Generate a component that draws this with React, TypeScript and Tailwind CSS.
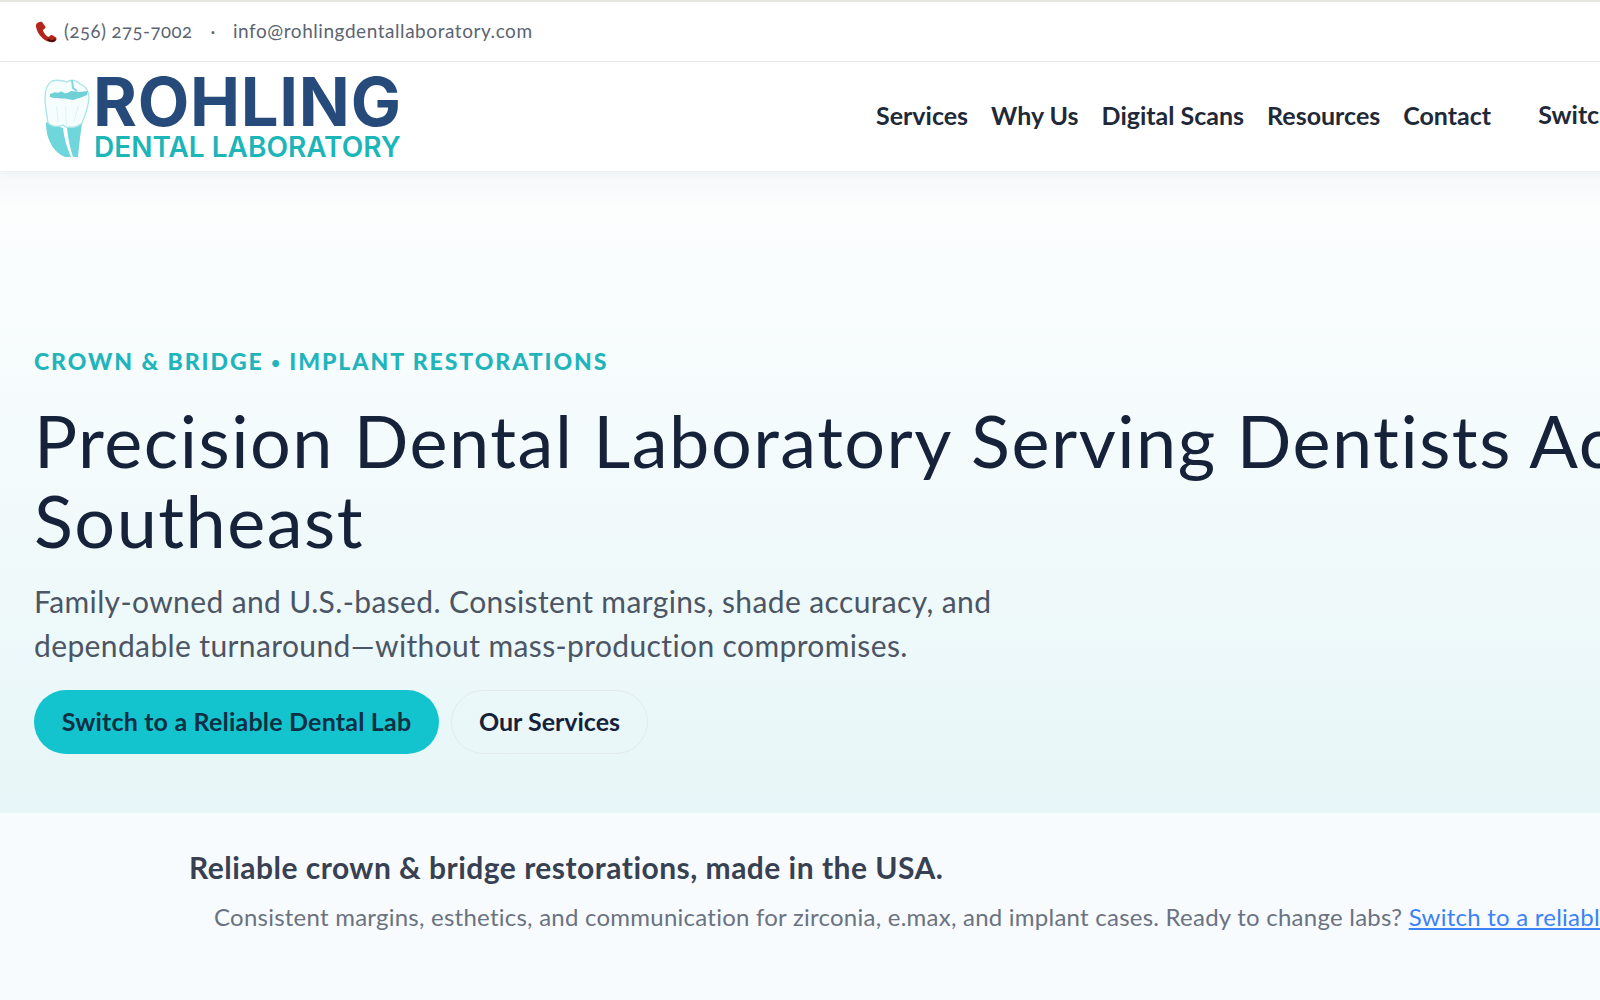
import { ReactNode } from "react";

const font = "font-['Lato','Open_Sans',sans-serif]";

function ToothLogo() {
  return (
    <svg viewBox="0 0 48 82" className="w-[48px] h-[82px] shrink-0">
      <path d="M3 46c0 8 1 14 4 20 3 7 8 12 15 15h6c-4-9-7-19-8-29L3 46Z" fill="#6fd6dc" />
      <path d="M24 52c1 10 3 20 6 29h5c1-11 2-21 4-33l-15 4Z" fill="#6fd6dc" />
      <path
        d="M9 5C4 8 2 14 2 22c0 9 2 17 3 25 4 4 10 4 15 2 2 2 4 3 6 2 5 1 10-1 13-4 3-7 6-16 7-24 0-7-3-13-9-15-3-4-9-5-13-2-5-2-11-2-15-1Z"
        fill="#f6fdfd"
        stroke="#a8e4e8"
        strokeWidth="1.3"
      />
      <path d="M7 18c3-1 5-3 8-1 2-2 4-2 6 0 3 1 5-1 7-2 3 0 6 1 9 1l8-1-1 4c-4 2-8 3-11 4-3 2-6 0-9 0-3-1-6 0-9-1-3 0-6 0-8-1v-3Z" fill="#6fd0d6" />
      <path d="M29 4l1 8 4 3" fill="none" stroke="#7fd6db" strokeWidth="2" />
      <path d="M24 50c-1-6-2-12-1-20M13 30c2 6 2 12 2 17M35 30c-1 6-3 11-4 16" fill="none" stroke="#dcf4f6" strokeWidth="1.1" />
    </svg>
  );
}

function Phone() {
  return (
    <svg viewBox="0 0 22 22" className="w-[22px] h-[22px] shrink-0">
      <path
        d="M3 1.500c-1.600.8-2.300 2.400-2 4.200.9 5 4 9.800 8.500 13 2.600 1.800 6.500 3 9.300 2.200 1.400-.4 2.400-1.500 2.700-2.700.2-.8-.1-1.400-.8-1.900l-3.300-2.100c-.8-.5-1.500-.4-2.100.2l-1.200 1.200c-.5.400-1 .4-1.500 0-2-1.500-3.600-3.600-4.500-5.900-.2-.6 0-1 .4-1.300l1.300-.9c.7-.5.8-1.200.5-2L7.800 1.900C7.300.8 6.500.5 5.400.7L3 1.500Z"
        fill="#b3261e"
      />
      <path d="M13 17.500c1.400 1 3.300 1.800 5 1.500 1-.2 1.700-.8 2.200-1.600l.6 1c-.5 1.300-1.700 2.300-3.200 2.500-2 .2-3.800-.6-5.400-1.700l.8-1.700Z" fill="#4a0d0a" />
    </svg>
  );
}

function NavLink({ children }: { children: ReactNode }) {
  return <a className="text-[25px] font-bold text-[#1f2937] whitespace-nowrap">{children}</a>;
}

export default function App() {
  const links = ["Services", "Why Us", "Digital Scans", "Resources", "Contact"];

  return (
    <div className={`${font} w-[1600px] h-[1000px] overflow-hidden bg-[#f7fbfe]`}>
      <div className="h-[62px] bg-white border-t-2 border-b border-t-[#e6e8e0] border-b-[#e8ebee] flex items-center pl-[35px] text-[18.5px] text-[#5b6472]">
        <Phone />
        <span className="ml-[7px] w-[129px] tracking-[0.5px] whitespace-nowrap [font-variant-numeric:oldstyle-nums]">(256) 275-7002</span>
        <span className="w-[40px] text-center">·</span>
        <span className="text-[19px] tracking-[0.55px] whitespace-nowrap">info@rohlingdentallaboratory.com</span>
      </div>

      <div className="h-[110px] bg-white flex items-center pl-[43px] w-[1900px] border-b border-[#eef1f2] shadow-[0_2px_8px_rgba(0,0,0,0.03)] relative">
        <ToothLogo />
        <div className="ml-[2px] mt-[2px] w-[320px] font-['Inter',sans-serif]">
          <div className="text-[67px] font-bold tracking-[0.7px] text-[#264a7a] h-[56px] leading-[56px] whitespace-nowrap">ROHLING</div>
          <div className="ml-[1px] text-[28px] leading-[28px] font-semibold text-[#1cb5b8] mt-[3px] whitespace-nowrap">DENTAL LABORATORY</div>
        </div>
        <nav className="ml-[463px] pb-[2px] flex items-center gap-[23px]">
          {links.map((l) => (
            <NavLink key={l}>{l}</NavLink>
          ))}
          <NavLink>
            <span className="ml-[24px] relative -top-[1px]">Switch to a Reliable Dental Lab</span>
          </NavLink>
        </nav>
      </div>

      <section className="h-[641px] pl-[34px] pt-[175px] bg-gradient-to-b from-[#f6f9f9] via-[#fcfefe] via-[6%] to-[#e7f6f8] w-[1600px]">
        <div className="text-[23px] leading-[28px] font-black tracking-[1.95px] text-[#1fb5bb] whitespace-nowrap">
          CROWN &amp; BRIDGE <span className="text-[15px] relative -top-[2px]">•</span> IMPLANT RESTORATIONS
        </div>
        <h1 className="mt-[22px] text-[72px] leading-[80px] font-normal tracking-[1.5px] text-[#16213a] whitespace-nowrap">
          Precision Dental Laboratory Serving Dentists Across the
          <br />
          Southeast
        </h1>
        <p className="mt-[19px] w-[1000px] text-[30px] leading-[44px] tracking-[0.38px] text-[#4b5563]">
          Family-owned and U.S.-based. Consistent margins, shade accuracy, and dependable turnaround—without mass-production compromises.
        </p>
        <div className="mt-[23px] flex gap-[12px]">
          <a className="h-[64px] w-[405px] rounded-full bg-[#13c4ce] text-[#0f2f45] text-[25px] tracking-[0.2px] font-bold flex items-center justify-center whitespace-nowrap">
            Switch to a Reliable Dental Lab
          </a>
          <a className="h-[64px] w-[197px] rounded-full border border-[#e4eaee] text-[#16213a] text-[25px] font-bold flex items-center justify-center whitespace-nowrap">
            Our Services
          </a>
        </div>
      </section>

      <section className="pl-[189px] pt-[34px] w-[1900px]">
        <h2 className="text-[30px] leading-[40px] font-bold tracking-[0.48px] text-[#374151]">Reliable crown &amp; bridge restorations, made in the USA.</h2>
        <p className="mt-[12px] ml-[25px] text-[24px] leading-[36px] tracking-[0.24px] text-[#6b7280] whitespace-nowrap">
          Consistent margins, esthetics, and communication for zirconia, e.max, and implant cases. Ready to change labs?{" "}
          <a className="text-[#3b82f6] underline">Switch to a reliable dental lab</a>
        </p>
      </section>
    </div>
  );
}
